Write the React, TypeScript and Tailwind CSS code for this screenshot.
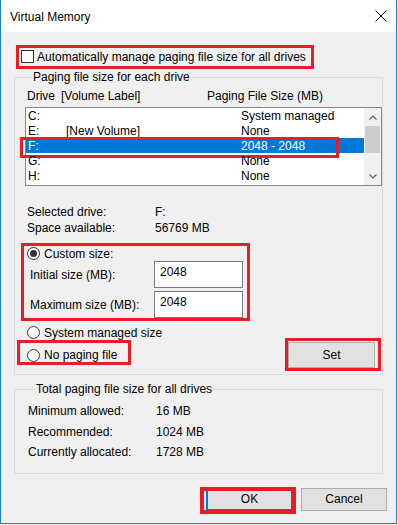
import type { ReactNode } from "react";

// Red annotation frame drawn over a control
function Mark({ className }: { className: string }) {
  return <span className={`pointer-events-none absolute border-[3px] border-[#ec1c24] ${className}`} />;
}

function Check() {
  return <span className="h-[13px] w-[13px] shrink-0 border border-[#333333] bg-white" />;
}

function Radio({ on }: { on?: boolean }) {
  return (
    <span className="flex h-[13px] w-[13px] shrink-0 items-center justify-center rounded-full border border-[#333333] bg-white">
      {on && <span className="h-[7px] w-[7px] rounded-full bg-[#333333]" />}
    </span>
  );
}

function Field({ value }: { value: string }) {
  return (
    <div className="h-[27px] w-[89px] border border-[#7a7a7a] bg-white pl-[5px] pt-[2px] leading-[16px]">{value}</div>
  );
}

function Button({ children, focused, className = "" }: { children: ReactNode; focused?: boolean; className?: string }) {
  return (
    <div
      className={`flex items-center justify-center bg-[#e1e1e1] ${
        focused ? "border-2 border-[#0078d7]" : "border border-[#adadad]"
      } ${className}`}
    >
      {children}
    </div>
  );
}

const drives = [
  { drive: "C:", label: "", size: "System managed" },
  { drive: "E:", label: "[New Volume]", size: "None" },
  { drive: "F:", label: "", size: "2048 - 2048", selected: true },
  { drive: "G:", label: "", size: "None" },
  { drive: "H:", label: "", size: "None" },
];

const totals = [
  ["Minimum allowed:", "16 MB"],
  ["Recommended:", "1024 MB"],
  ["Currently allocated:", "1728 MB"],
];

export default function App() {
  return (
    <div
      className="h-[525px] w-[398px] bg-[#f0f0f0] text-[12px] leading-[16px] text-black"
      style={{ fontFamily: '"Liberation Sans", Arial, sans-serif' }}
    >
      <div className="flex h-[524px] w-[397px] flex-col border-x border-b border-[#1883d7] bg-[#f0f0f0]">
        {/* Title bar */}
        <div className="flex h-[32px] shrink-0 items-center bg-white pl-[9px] pr-[9px] pt-[1px]">
          <span className="flex-1">Virtual Memory</span>
          <svg width="12" height="12" viewBox="0 0 12 12" className="mb-[1px]">
            <path d="M0.5 0.5 L11.5 11.5 M11.5 0.5 L0.5 11.5" stroke="#000" strokeWidth="1" />
          </svg>
        </div>

        {/* Automatic checkbox */}
        <div className="relative ml-[20px] mt-[16px] flex h-[17px] items-center gap-[3px]">
          <Check />
          <span>Automatically manage paging file size for all drives</span>
          <Mark className="left-[-5px] top-[-3px] h-[24px] w-[298px]" />
        </div>

        {/* Per drive group */}
        <fieldset className="ml-[13px] mt-[4px] w-[369px] border border-[#dcdcdc] pb-[6px] pl-[10px]">
          <legend className="ml-[7px] px-[1px]">Paging file size for each drive</legend>

          <div className="ml-[2px] mt-[3px] flex h-[16px]">
            <span className="w-[34px]">Drive</span>
            <span className="w-[146px]">[Volume Label]</span>
            <span>Paging File Size (MB)</span>
          </div>

          <div className="relative mt-[3px] flex h-[79px] w-[357px] border border-[#828790] bg-white">
            <div className="flex-1 pt-[0px]">
              {drives.map((d) => (
                <div
                  key={d.drive}
                  className={`relative flex h-[15px] items-center pl-[2px] ${d.selected ? "bg-[#0078d7] text-white" : ""}`}
                >
                  <span className="w-[38px]">{d.drive}</span>
                  <span className="w-[175px]">{d.label}</span>
                  <span>{d.size}</span>
                  {d.selected && <Mark className="left-[-6px] top-[-1px] h-[21px] w-[319px]" />}
                </div>
              ))}
            </div>
            <div className="flex w-[17px] flex-col bg-[#f0f0f0]">
              <div className="flex h-[17px] items-center justify-center pt-[2px]">
                <svg width="8" height="5" viewBox="0 0 8 5">
                  <path d="M0.5 4.5 L4 1 L7.5 4.5" fill="none" stroke="#606060" strokeWidth="1.2" />
                </svg>
              </div>
              <div className="ml-[1px] mt-[1px] h-[27px] w-[15px] bg-[#cdcdcd]" />
              <div className="flex-1" />
              <div className="flex h-[17px] items-center justify-center">
                <svg width="8" height="5" viewBox="0 0 8 5">
                  <path d="M0.5 0.5 L4 4 L7.5 0.5" fill="none" stroke="#606060" strokeWidth="1.2" />
                </svg>
              </div>
            </div>
          </div>

          <div className="ml-[2px] mt-[18px] flex">
            <span className="w-[128px]">Selected drive:</span>
            <span>F:</span>
          </div>
          <div className="ml-[2px] flex">
            <span className="w-[128px]">Space available:</span>
            <span>56769 MB</span>
          </div>

          {/* Custom size block */}
          <div className="relative mt-[10px]">
            <div className="ml-[2px] flex h-[15px] items-center gap-[4px]">
              <Radio on />
              <span>Custom size:</span>
            </div>
            <div className="ml-[5px] flex h-[27px] items-center">
              <span className="w-[124px]">Initial size (MB):</span>
              <Field value="2048" />
            </div>
            <div className="ml-[5px] mt-[3px] flex h-[27px] items-center">
              <span className="w-[124px]">Maximum size (MB):</span>
              <Field value="2048" />
            </div>
            <Mark className="left-[-4px] top-[-3px] bottom-[-3px] w-[229px]" />
          </div>

          <div className="ml-[2px] mt-[7px] flex h-[15px] items-center gap-[4px]">
            <Radio />
            <span>System managed size</span>
          </div>

          <div className="mt-[2px] flex h-[26px] items-center">
            <div className="relative ml-[2px] flex items-center gap-[4px]">
              <Radio />
              <span>No paging file</span>
              <Mark className="left-[-10px] top-[-7px] h-[25px] w-[114px]" />
            </div>
            <div className="relative ml-auto mr-[7px]">
              <Button className="h-[26px] w-[87px]">Set</Button>
              <Mark className="left-[-3px] top-[-4px] h-[33px] w-[96px]" />
            </div>
          </div>
        </fieldset>

        {/* Totals group */}
        <fieldset className="ml-[13px] mt-[6px] w-[369px] border border-[#dcdcdc] pb-[10px] pl-[13px] pt-[4px]">
          <legend className="ml-[7px] px-[1px]">Total paging file size for all drives</legend>
          {totals.map(([k, v]) => (
            <div key={k} className="flex h-[20.5px] items-center">
              <span className="w-[128px]">{k}</span>
              <span>{v}</span>
            </div>
          ))}
        </fieldset>

        {/* Dialog buttons */}
        <div className="mr-[9px] mt-[14px] flex justify-end gap-[8px]">
          <div className="relative">
            <Button focused className="h-[23px] w-[87px]">OK</Button>
            <Mark className="left-[-6px] top-[-1px] h-[27px] w-[96px] border-[4px]" />
          </div>
          <Button className="h-[23px] w-[86px]">Cancel</Button>
        </div>
      </div>
    </div>
  );
}
